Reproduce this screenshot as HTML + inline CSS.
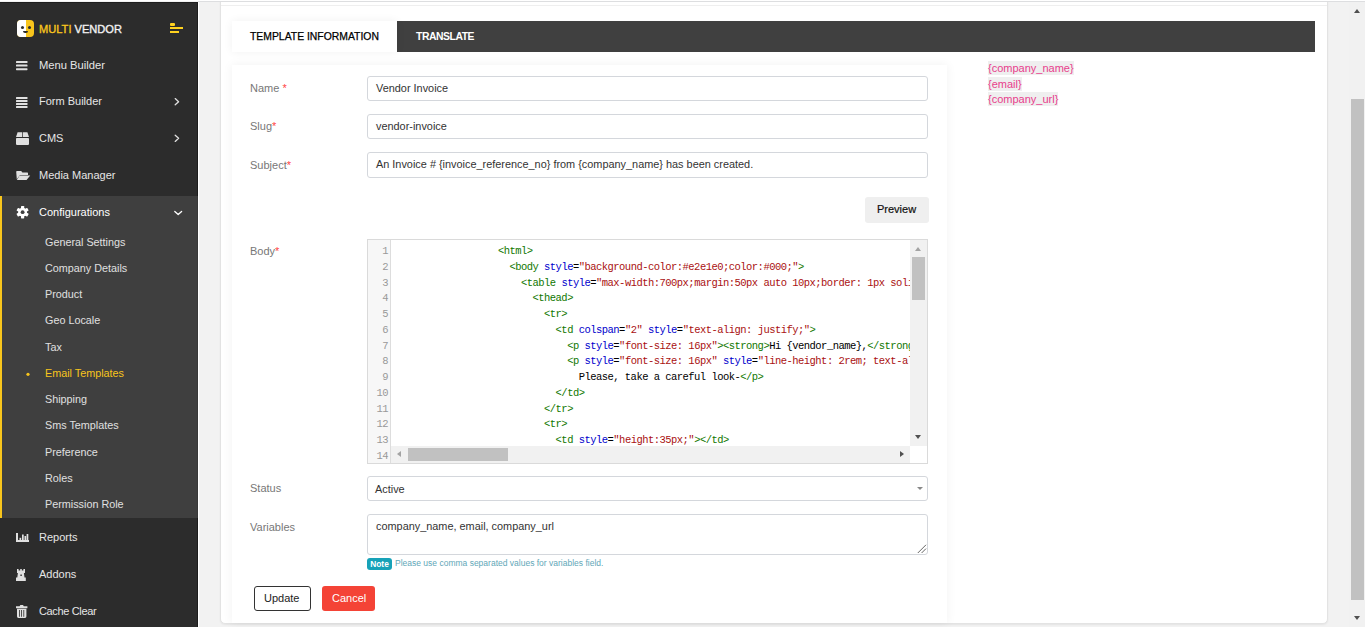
<!DOCTYPE html>
<html><head><meta charset="utf-8">
<style>
*{box-sizing:border-box;margin:0;padding:0}
html,body{width:1365px;height:627px;overflow:hidden;background:#f2f2f2;font-family:"Liberation Sans",sans-serif}
.a{position:absolute}
#topw{left:0;top:0;width:1365px;height:1px;background:#fff}
#topg{left:198px;top:1px;width:1167px;height:1px;background:#dddee0}
#sb{left:0;top:2px;width:198px;height:625px;background:#2c2c2c;border-top:1px solid #1e1e1e;border-right:1px solid #1c1c1c}
#sbw{left:198px;top:1px;width:1px;height:626px;background:#fff}
.mi{position:absolute;left:39px;font-size:11px;color:#e6e6e6;line-height:14px;white-space:nowrap}
.si{position:absolute;left:45px;font-size:10.8px;color:#e0e0e0;line-height:14px;white-space:nowrap}
#sub{left:0;top:196px;width:198px;height:322px;background:#3f3f3f;border-left:2px solid #f8c51c;border-right:1px solid #383838}
.chev{position:absolute;width:5px;height:5px;border-right:1.5px solid #e0e0e0;border-bottom:1.5px solid #e0e0e0}
#card{left:220px;top:-20px;width:1108px;height:644px;background:#fff;border:1px solid #e3e3e3;border-radius:5px;box-shadow:0 1px 2px rgba(0,0,0,.06)}
#cardline{left:221px;top:5px;width:1106px;height:1px;background:#efefef}
#tabs{left:232px;top:21px;width:1083px;height:31px;background:#404040}
#tab1{left:232px;top:21px;width:165px;height:31px;background:#fff;box-shadow:0 0 10px rgba(0,0,0,.06)}
.tabt{position:absolute;font-size:10.4px;line-height:12px;white-space:nowrap}
#form{left:232px;top:65px;width:715px;height:558px;background:#fff;box-shadow:0 0 10px rgba(0,0,0,.06)}
.lbl{position:absolute;left:250px;font-size:11px;color:#777;line-height:14px;white-space:nowrap}
.req{color:#f44}
.inp{position:absolute;left:367px;width:561px;height:25px;border:1px solid #d4d7dc;border-radius:3px;background:#fff}
.it{position:absolute;left:376px;font-size:10.9px;color:#333;line-height:14px;white-space:nowrap}
#prev{left:865px;top:197px;width:64px;height:26px;background:#efefef;border-radius:3px}
#ed{left:367px;top:239px;width:561px;height:225px;border:1px solid #dadada;background:#fff;overflow:hidden}
#gut{left:0;top:0;width:23px;height:223px;background:#f7f7f7;border-right:1px solid #ddd}
.ln{position:absolute;left:0;width:20px;text-align:right;font-family:"Liberation Mono",monospace;font-size:10.5px;letter-spacing:-0.53px;color:#999;line-height:15.75px}
#code{left:23px;top:0;width:519px;height:206px;overflow:hidden}
.cl{position:absolute;left:3px;font-family:"Liberation Mono",monospace;font-size:10.5px;letter-spacing:-0.53px;line-height:15.75px;white-space:pre;color:#000}
#vsb{left:542px;top:0;width:17px;height:206px;background:#f1f1f1}
#vth{left:2px;top:17px;width:13px;height:43px;background:#c1c1c1}
#hsb{left:23px;top:206px;width:519px;height:17px;background:#f1f1f1}
#hth{left:17px;top:2px;width:100px;height:13px;background:#c1c1c1}
#corner{left:542px;top:206px;width:17px;height:17px;background:#fff}
.tri{width:0;height:0;border-style:solid}
.up{left:5px;top:7px;border-width:0 3.5px 4px 3.5px;border-color:transparent transparent #a3a3a3 transparent}
.dn{left:5px;top:195px;border-width:4px 3.5px 0 3.5px;border-color:#505050 transparent transparent transparent}
.lf{left:6px;top:5px;border-width:3.5px 4px 3.5px 0;border-color:transparent #a3a3a3 transparent transparent}
.rt{left:509px;top:5px;border-width:3.5px 0 3.5px 4px;border-color:transparent transparent transparent #505050}
.t{color:#170}.at{color:#00c}.s{color:#a11}
code{font-family:"Liberation Sans",sans-serif}
.var{position:absolute;left:988px;font-size:11px;line-height:14px;color:#e83e8c;background:#efefef;white-space:nowrap}
</style></head><body>
<div class="a" id="sbw"></div>
<div class="a" id="sb"></div>
<div class="a" id="sub"></div>

<!-- logo -->
<div class="a" style="left:17px;top:20px;width:17px;height:17px;border-radius:4px;overflow:hidden;background:#f8c51c">
  <div class="a" style="left:0;top:0;width:8.5px;height:17px;background:#fff"></div>
  <div class="a" style="left:3.5px;top:6px;width:3px;height:3px;border-radius:50%;background:#2c2c2c"></div>
  <div class="a" style="left:10.5px;top:6px;width:3px;height:3px;border-radius:50%;background:#2c2c2c"></div>
  <div class="a" style="left:6px;top:10.5px;width:5px;height:2.5px;border-radius:0 0 3px 3px;background:#2c2c2c"></div>
</div>
<div class="a" style="left:39px;top:22px;font-size:11.1px;line-height:14px;color:#f8c51c;-webkit-text-stroke:0.35px #f8c51c;white-space:nowrap">MULTI <span style="color:#f2f2f2;-webkit-text-stroke:0.35px #f2f2f2">VENDOR</span></div>
<div class="a" style="left:170px;top:23px;width:5px;height:2.5px;background:#ffd21f;border-radius:1px"></div>
<div class="a" style="left:170px;top:27px;width:13px;height:2px;background:#ffd21f"></div>
<div class="a" style="left:170px;top:31px;width:9px;height:2px;background:#ffd21f"></div>

<div class="mi" style="top:58px;font-size:11.2px">Menu Builder</div>
<div class="mi" style="top:94px">Form Builder</div>
<div class="mi" style="top:131px">CMS</div>
<div class="mi" style="top:168px">Media Manager</div>
<div class="mi" style="top:205px;color:#fff">Configurations</div>
<div class="si" style="top:235px">General Settings</div>
<div class="si" style="top:261px">Company Details</div>
<div class="si" style="top:287px">Product</div>
<div class="si" style="top:313px">Geo Locale</div>
<div class="si" style="top:340px">Tax</div>
<div class="si" style="top:366px;color:#f8c51c">Email Templates</div>
<div class="si" style="top:392px">Shipping</div>
<div class="si" style="top:418px">Sms Templates</div>
<div class="si" style="top:445px">Preference</div>
<div class="si" style="top:471px">Roles</div>
<div class="si" style="top:497px">Permission Role</div>
<div class="mi" style="top:530px">Reports</div>
<div class="mi" style="top:567px">Addons</div>
<div class="mi" style="top:604px;letter-spacing:-0.35px">Cache Clear</div>

<svg class="a" style="left:0;top:0" width="198" height="627" viewBox="0 0 198 627">
<g fill="#e0e0e0">
 <rect x="16" y="61" width="11.5" height="2" rx="0.6"/>
 <rect x="16" y="64.6" width="11.5" height="2" rx="0.6"/>
 <rect x="16" y="68.2" width="11.5" height="2" rx="0.6"/>
 <rect x="16" y="97" width="11.5" height="2" rx="0.5"/>
 <rect x="16" y="100" width="11.5" height="2" rx="0.5"/>
 <rect x="16" y="103" width="11.5" height="2" rx="0.5"/>
 <rect x="16" y="106" width="11.5" height="2" rx="0.5"/>
 <path d="M17.6 132.2 H22.2 V137 H16 Z M22.9 132.2 H27.4 L29 137 H22.9 Z"/>
 <rect x="16" y="138" width="13" height="6.9" rx="0.8"/>
 <path d="M16.2 171.8 Q16.2 171 17 171 H21.2 L22.4 172.4 H27.3 Q28 172.4 28 173.1 V175 H20 L16.8 179.2 Z"/>
 <path d="M19.6 175.6 H30.2 L26.6 180 H16.8 Z"/>
 <path d="M16 533 H18 V540 H29 V542 H16 Z"/>
 <rect x="19.5" y="537.8" width="1.7" height="2.2"/>
 <rect x="22" y="534.5" width="1.7" height="5.5"/>
 <rect x="24.5" y="536" width="1.7" height="4"/>
 <rect x="26.6" y="534" width="1.7" height="6"/>
 <path d="M17 569 H18.6 V570.6 H20.2 V569 H21.8 V570.6 H23.4 V569 H25 V573 H23.9 L24.5 577.4 H25.8 V581 H16 V577.4 H17.3 L17.9 573 H17 Z M20.4 574.4 V576 H21.8 V574.4 Z" fill-rule="evenodd"/>
 <path d="M16 606.2 H19.6 L20.4 605 H23 L23.8 606.2 H27.4 V608.2 H16 Z"/>
 <path d="M17 608.8 H26.4 V616.6 Q26.4 618 25 618 H18.4 Q17 618 17 616.6 Z M19 610 V616.8 H19.8 V610 Z M21.2 610 V616.8 H22 V610 Z M23.4 610 V616.8 H24.2 V610 Z" fill-rule="evenodd"/>
</g>
<g fill="none" stroke="#e0e0e0" stroke-width="1.3" stroke-linecap="round" stroke-linejoin="round">
 <path d="M175.2 98.6 L178.6 101.7 L175.2 104.8"/>
 <path d="M175.2 135.2 L178.6 138.3 L175.2 141.4"/>
 <path d="M174.8 211.4 L178.2 214.5 L181.6 211.4" stroke="#fff"/>
</g>
<g transform="translate(22.6,212.2)" fill="#fff"><circle r="4.4"/><rect x="-1.6" y="-6.2" width="3.2" height="12.4" rx="0.6"/><rect x="-1.6" y="-6.2" width="3.2" height="12.4" rx="0.6" transform="rotate(60)"/><rect x="-1.6" y="-6.2" width="3.2" height="12.4" rx="0.6" transform="rotate(120)"/><circle r="1.9" fill="#3f3f3f"/></g>
<circle cx="28" cy="374.3" r="1.6" fill="#f8c51c"/>
</svg>
<!-- main -->
<div class="a" id="card"></div>
<div class="a" id="cardline"></div>
<div class="a" id="tabs"></div>
<div class="a" id="tab1"></div>
<div class="tabt" style="left:250px;top:31px;color:#000;-webkit-text-stroke:0.25px #000">TEMPLATE INFORMATION</div>
<div class="tabt" style="left:416px;top:31px;color:#fff;font-weight:bold;font-size:10.4px;letter-spacing:-0.45px">TRANSLATE</div>

<div class="a" id="form"></div>
<div class="lbl" style="top:81px">Name <span class="req">*</span></div>
<div class="lbl" style="top:119px">Slug<span class="req">*</span></div>
<div class="lbl" style="top:158px">Subject<span class="req">*</span></div>
<div class="lbl" style="top:244px">Body<span class="req">*</span></div>
<div class="lbl" style="top:481px">Status</div>
<div class="lbl" style="top:520px">Variables</div>

<div class="inp" style="top:76px"></div>
<div class="it" style="top:81px">Vendor Invoice</div>
<div class="inp" style="top:114px"></div>
<div class="it" style="top:119px">vendor-invoice</div>
<div class="inp" style="top:152px;height:26px"></div>
<div class="it" style="top:157px">An Invoice # {invoice_reference_no} from {company_name} has been created.</div>

<div class="a" id="prev"></div>
<div class="a" style="left:877px;top:202px;font-size:11px;line-height:14px;color:#111;-webkit-text-stroke:0.2px #111">Preview</div>

<div class="a" id="ed">
  <div class="a" id="gut"><div class="ln" style="top:4.00px">1</div><div class="ln" style="top:19.75px">2</div><div class="ln" style="top:35.50px">3</div><div class="ln" style="top:51.25px">4</div><div class="ln" style="top:67.00px">5</div><div class="ln" style="top:82.75px">6</div><div class="ln" style="top:98.50px">7</div><div class="ln" style="top:114.25px">8</div><div class="ln" style="top:130.00px">9</div><div class="ln" style="top:145.75px">10</div><div class="ln" style="top:161.50px">11</div><div class="ln" style="top:177.25px">12</div><div class="ln" style="top:193.00px">13</div><div class="ln" style="top:208.75px">14</div></div>
  <div class="a" id="code"><div class="cl" style="top:4.00px">                  <span class="t">&lt;html&gt;</span></div>
<div class="cl" style="top:19.75px">                    <span class="t">&lt;body</span> <span class="at">style</span>=<span class="s">"background-color:#e2e1e0;color:#000;"</span><span class="t">&gt;</span></div>
<div class="cl" style="top:35.50px">                      <span class="t">&lt;table</span> <span class="at">style</span>=<span class="s">"max-width:700px;margin:50px auto 10px;border: 1px solid #dddddd;"</span><span class="t">&gt;</span></div>
<div class="cl" style="top:51.25px">                        <span class="t">&lt;thead&gt;</span></div>
<div class="cl" style="top:67.00px">                          <span class="t">&lt;tr&gt;</span></div>
<div class="cl" style="top:82.75px">                            <span class="t">&lt;td</span> <span class="at">colspan</span>=<span class="s">"2"</span> <span class="at">style</span>=<span class="s">"text-align: justify;"</span><span class="t">&gt;</span></div>
<div class="cl" style="top:98.50px">                              <span class="t">&lt;p</span> <span class="at">style</span>=<span class="s">"font-size: 16px"</span><span class="t">&gt;&lt;strong&gt;</span>Hi {vendor_name},<span class="t">&lt;/strong&gt;&lt;/p&gt;</span></div>
<div class="cl" style="top:114.25px">                              <span class="t">&lt;p</span> <span class="at">style</span>=<span class="s">"font-size: 16px"</span> <span class="at">style</span>=<span class="s">"line-height: 2rem; text-align: justify;"</span><span class="t">&gt;</span></div>
<div class="cl" style="top:130.00px">                                Please, take a careful look-<span class="t">&lt;/p&gt;</span></div>
<div class="cl" style="top:145.75px">                            <span class="t">&lt;/td&gt;</span></div>
<div class="cl" style="top:161.50px">                          <span class="t">&lt;/tr&gt;</span></div>
<div class="cl" style="top:177.25px">                          <span class="t">&lt;tr&gt;</span></div>
<div class="cl" style="top:193.00px">                            <span class="t">&lt;td</span> <span class="at">style</span>=<span class="s">"height:35px;"</span><span class="t">&gt;&lt;/td&gt;</span></div>
<div class="cl" style="top:208.75px">                            </div></div>
  <div class="a" id="vsb"><div class="a" id="vth"></div><div class="a tri up"></div><div class="a tri dn"></div></div>
  <div class="a" id="hsb"><div class="a" id="hth"></div><div class="a tri lf"></div><div class="a tri rt"></div></div>
  <div class="a" id="corner"></div>
</div>

<div class="inp" style="top:476px"></div>
<div class="it" style="top:482px;left:375px">Active</div>
<div class="a tri" style="left:917px;top:487px;border-width:3.5px 3px 0 3px;border-color:#888 transparent transparent transparent"></div>
<div class="inp" style="top:514px;height:41px"></div>
<div class="it" style="top:519px">company_name, email, company_url</div>
<svg class="a" style="left:915px;top:543px" width="12" height="12"><path d="M2.8 10 L11 1.8 M6.6 10 L11 5.6" stroke="#555" stroke-width="0.9"/></svg>

<div class="a" style="left:367px;top:558px;width:25px;height:12px;background:#17a2b8;border-radius:3px;color:#fff;font-size:8.4px;font-weight:bold;line-height:12px;text-align:center">Note</div>
<div class="a" style="left:395px;top:557px;font-size:8.5px;line-height:12px;color:#5fa7b8;white-space:nowrap">Please use comma separated values for variables field.</div>

<div class="a" style="left:254px;top:586px;width:57px;height:25px;border:1px solid #333;border-radius:3px;background:#fff"></div>
<div class="a" style="left:264px;top:591px;font-size:11px;line-height:14px;color:#222">Update</div>
<div class="a" style="left:322px;top:586px;width:53px;height:25px;border-radius:3px;background:#f44336"></div>
<div class="a" style="left:332px;top:591px;font-size:11px;line-height:14px;color:#fff">Cancel</div>

<div class="var" style="top:61px">{company_name}</div>
<div class="var" style="top:77px">{email}</div>
<div class="var" style="top:92px">{company_url}</div>

<div class="a" id="topw"></div>
<div class="a" id="topg"></div>
<!-- page scrollbar -->
<div class="a" style="left:1349px;top:2px;width:16px;height:625px;background:#f1f1f1"></div>
<div class="a" style="left:1351px;top:99px;width:13px;height:501px;background:#c1c1c1"></div>
<div class="a tri" style="left:1354px;top:9px;border-width:0 3.5px 4px 3.5px;border-color:transparent transparent #505050 transparent"></div>
<div class="a tri" style="left:1354px;top:616px;border-width:4px 3.5px 0 3.5px;border-color:#505050 transparent transparent transparent"></div>
</body></html>
